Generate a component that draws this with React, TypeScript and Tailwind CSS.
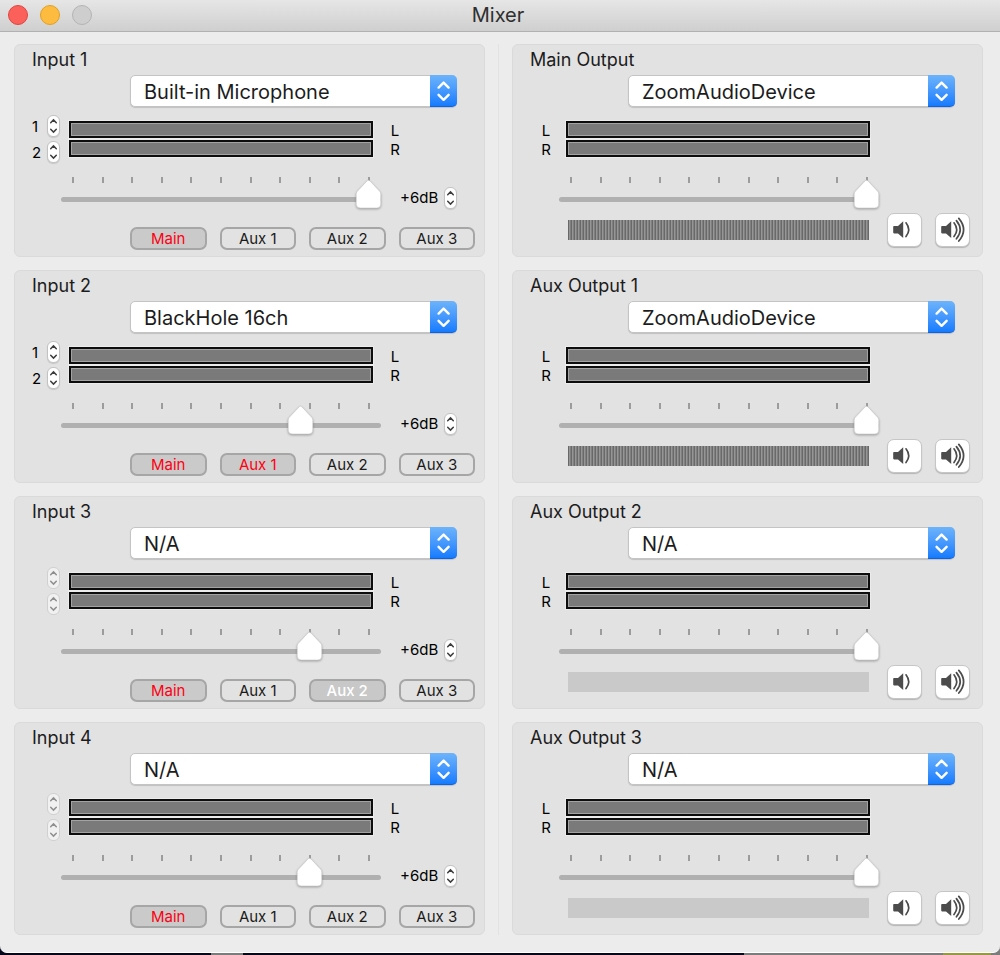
import { useState } from "react";
import type { ReactNode } from "react";

type RouteState = "off" | "on" | "muted";

type InputChannel = {
  name: string;
  device: string;
  channels: string[];
  level: number;
  gain: string;
  routes: RouteState[];
};

type OutputChannel = {
  name: string;
  device: string;
  buffering: boolean;
};

const DEVICES = ["Built-in Microphone", "BlackHole 16ch", "ZoomAudioDevice", "N/A"];
const ROUTES = ["Main", "Aux 1", "Aux 2", "Aux 3"];
const TICKS = Array.from({ length: 11 }, (_, i) => i);

const INPUTS: InputChannel[] = [
  { name: "Input 1", device: "Built-in Microphone", channels: ["1", "2"], level: 100, gain: "+6dB", routes: ["on", "off", "off", "off"] },
  { name: "Input 2", device: "BlackHole 16ch", channels: ["1", "2"], level: 77, gain: "+6dB", routes: ["on", "on", "off", "off"] },
  { name: "Input 3", device: "N/A", channels: ["", ""], level: 80, gain: "+6dB", routes: ["on", "off", "muted", "off"] },
  { name: "Input 4", device: "N/A", channels: ["", ""], level: 80, gain: "+6dB", routes: ["on", "off", "off", "off"] },
];

const OUTPUTS: OutputChannel[] = [
  { name: "Main Output", device: "ZoomAudioDevice", buffering: true },
  { name: "Aux Output 1", device: "ZoomAudioDevice", buffering: true },
  { name: "Aux Output 2", device: "N/A", buffering: false },
  { name: "Aux Output 3", device: "N/A", buffering: false },
];

function DeviceSelect({ label, value }: { label: string; value: string }) {
  return (
    <div className="relative mt-[5px] mr-7 ml-[116px]">
      <select
        aria-label={`${label} device`}
        defaultValue={value}
        className="block h-8 w-full appearance-none rounded-[5px] border border-[#c4c4c4] bg-white pt-px pr-8 pl-[13px] text-[20px] leading-[28px] text-[#1c1c1c] shadow-[0_1px_1px_rgba(0,0,0,0.15)]"
      >
        {DEVICES.map((d) => (
          <option key={d}>{d}</option>
        ))}
      </select>
      <span className="pointer-events-none absolute inset-y-0 right-0 flex w-[27px] items-center justify-center rounded-r-[5px] border-b border-[#0f63e0] bg-linear-to-b from-[#6cb3fa] to-[#147bff]">
        <svg width="14" height="20" viewBox="0 0 14 20" fill="none" stroke="white" strokeWidth="2.4" strokeLinecap="round" strokeLinejoin="round">
          <path d="M1.6 6.6 L6.6 1.6 L11.6 6.6 M1.6 13.8 L6.6 18.8 L11.6 13.8" />
        </svg>
      </span>
    </div>
  );
}

function Stepper({ label, disabled = false }: { label: string; disabled?: boolean }) {
  const look = disabled
    ? "bg-[#f1f1f1] text-[#8f8f8f] border-[#d0d0d0]"
    : "bg-white text-[#3c3c3c] border-[#c2c2c2] shadow-[0_1px_1px_rgba(0,0,0,0.12)]";
  return (
    <div className={`flex h-[22px] w-[13px] shrink-0 flex-col overflow-hidden rounded-[6px] border ${look}`}>
      <button type="button" disabled={disabled} aria-label={`${label} up`} className="flex flex-1 items-center justify-center">
        <svg width="9" height="6" viewBox="0 0 9 6" fill="none" stroke="currentColor" strokeWidth="1.5" strokeLinecap="round">
          <path d="M1.7 4.7 L4.5 1.9 L7.3 4.7" />
        </svg>
      </button>
      <button type="button" disabled={disabled} aria-label={`${label} down`} className="flex flex-1 items-center justify-center">
        <svg width="9" height="6" viewBox="0 0 9 6" fill="none" stroke="currentColor" strokeWidth="1.5" strokeLinecap="round">
          <path d="M1.7 1.3 L4.5 4.1 L7.3 1.3" />
        </svg>
      </button>
    </div>
  );
}

function Meters() {
  return (
    <div className="flex flex-1 flex-col gap-[2px]">
      {["L", "R"].map((side) => (
        <div key={side} className="h-[17px] border-2 border-[#0d0d0d] bg-[#7a7a7a] shadow-[0_0_0_1px_#ececec,inset_0_0_0_1px_#a3a3a3]" />
      ))}
    </div>
  );
}

function SideLabels() {
  return (
    <div className="w-[12px] pt-[2px] text-center text-[15px] leading-[19px] text-black">
      <div>L</div>
      <div>R</div>
    </div>
  );
}

function Fader({ label, initial }: { label: string; initial: number }) {
  const [value, setValue] = useState(initial);
  return (
    <div className="relative h-8 flex-1">
      <div className="flex justify-between px-[11px]">
        {TICKS.map((t) => (
          <span key={t} className="h-[6px] w-[2px] bg-[#9c9c9c]" />
        ))}
      </div>
      <div className="mt-[14px] h-[5px] rounded-full bg-[#b0b0b0]" />
      <div className="pointer-events-none absolute right-[12px] bottom-0 left-[12px] h-[30px]">
        <svg
          width="27"
          height="30"
          viewBox="0 0 27 30"
          className="absolute top-0 -ml-[14px] overflow-visible drop-shadow-[0_1px_1px_rgba(0,0,0,0.3)]"
          style={{ left: `${value}%` }}
        >
          <path
            d="M13.5 1.2 Q14.2 1.2 15 2 L24.6 12.2 Q25.8 13.6 25.8 15.2 V25 Q25.8 29 21.8 29 H5.2 Q1.2 29 1.2 25 V15.2 Q1.2 13.6 2.4 12.2 L12 2 Q12.8 1.2 13.5 1.2 Z"
            fill="white"
            stroke="#c6c6c6"
            strokeWidth="0.6"
          />
        </svg>
      </div>
      <input
        type="range"
        min={0}
        max={100}
        value={value}
        aria-label={`${label} level`}
        onChange={(e) => setValue(Number(e.target.value))}
        className="absolute inset-0 h-full w-full opacity-0"
      />
    </div>
  );
}

function RouteButton({ label, initial }: { label: string; initial: RouteState }) {
  const [state, setState] = useState(initial);
  const look = {
    off: "bg-transparent text-[#1a1a1a]",
    on: "bg-[#cacaca] text-[#ff0012]",
    muted: "bg-[#c8c8c8] text-white font-medium",
  }[state];
  return (
    <button
      type="button"
      aria-pressed={state !== "off"}
      onClick={() => setState(state === "off" ? "on" : "off")}
      className={`h-[23px] rounded-[7px] border-2 border-[#a6a6a6] pt-px text-[15px] leading-[18px] ${look}`}
    >
      {label}
    </button>
  );
}

function Panel({ title, children }: { title: string; children: ReactNode }) {
  return (
    <section className="h-[213px] rounded-[6px] border border-[#dadada] bg-[#e2e2e2] pt-[5px]">
      <h2 className="pl-[17px] text-[18px] leading-5 text-[#1c1c1c]">{title}</h2>
      <div className="-mx-px">{children}</div>
    </section>
  );
}

function InputPanel({ channel }: { channel: InputChannel }) {
  return (
    <Panel title={channel.name}>
      <DeviceSelect label={channel.name} value={channel.device} />
      <div className="mt-2 flex h-12 items-center pr-[84px] pl-[18px]">
        <div className="mr-[9px] flex flex-col gap-1">
          {channel.channels.map((c, i) => (
            <div key={i} className="flex h-[22px] items-center text-[15px] leading-5 text-black">
              <span className="w-[15px] pt-[2px]">{c}</span>
              <Stepper label={`${channel.name} channel ${i + 1}`} disabled={c === ""} />
            </div>
          ))}
        </div>
        <Meters />
        <div className="ml-[16px]">
          <SideLabels />
        </div>
      </div>
      <div className="mt-[14px] flex items-end pr-7 pl-[47px]">
        <Fader label={channel.name} initial={channel.level} />
        <span className="ml-[19px] w-11 text-[15px] leading-[22px] text-black">{channel.gain}</span>
        <Stepper label={`${channel.name} gain`} />
      </div>
      <div className="mt-[18px] mr-[10px] ml-[116px] grid grid-cols-4 gap-[13px]">
        {ROUTES.map((r, i) => (
          <RouteButton key={r} label={r} initial={channel.routes[i]} />
        ))}
      </div>
    </Panel>
  );
}

function SpeakerButton({ label, waves }: { label: string; waves: string[] }) {
  return (
    <button
      type="button"
      aria-label={label}
      className="flex h-[34px] w-[35px] shrink-0 items-center justify-center rounded-[7px] border border-[#c6c6c6] bg-white shadow-[0_1px_1px_rgba(0,0,0,0.2)]"
    >
      <svg width="29" height="26" viewBox="0 0 29 26" fill="none" stroke="#4c4c4c" strokeWidth="1.7" strokeLinecap="round">
        <path d="M4 9 H8 L13.2 4.2 V21 L8 16.4 H4 Q3.2 16.4 3.2 15.6 V9.8 Q3.2 9 4 9 Z" fill="#4c4c4c" stroke="none" />
        {waves.map((d) => (
          <path key={d} d={d} />
        ))}
      </svg>
    </button>
  );
}

const NEAR_WAVE = "M16 5.8 Q21.4 12.7 16 19.6";
const FAR_WAVES = [NEAR_WAVE, "M18.4 3.6 Q26 12.7 18.4 21.8", "M20.8 1.4 Q30.4 12.7 20.8 24"];

function OutputPanel({ channel }: { channel: OutputChannel }) {
  const bar = channel.buffering
    ? "bg-[repeating-linear-gradient(90deg,#696969_0_1px,#969696_1px_2px,#808080_2px_3px)]"
    : "bg-[#c9c9c9]";
  return (
    <Panel title={channel.name}>
      <DeviceSelect label={channel.name} value={channel.device} />
      <div className="mt-2 flex h-12 items-center pr-[113px] pl-[28px]">
        <div className="mr-[14px]">
          <SideLabels />
        </div>
        <Meters />
      </div>
      <div className="mt-[14px] flex pr-[104px] pl-[47px]">
        <Fader label={channel.name} initial={100} />
      </div>
      <div className="mt-1 flex items-center pr-[13px] pl-[56px]">
        <div className={`mr-[18px] h-5 flex-1 ${bar}`} />
        <div className="flex gap-[13px]">
          <SpeakerButton label={`${channel.name} quieter`} waves={[NEAR_WAVE]} />
          <SpeakerButton label={`${channel.name} louder`} waves={FAR_WAVES} />
        </div>
      </div>
    </Panel>
  );
}

export default function App() {
  return (
    <div className="min-h-screen bg-[linear-gradient(90deg,#07071c_0_21.1%,#7c7c7c_21.1%_24.3%,#07071c_24.3%_74.4%,#7c7c7c_74.4%_94.3%,#98983c_94.3%_99.1%,#7c7c7c_99.1%)] font-['Inter','Liberation_Sans',sans-serif]">
      <div className="overflow-hidden rounded-b-[7px] border-b border-white bg-[#ececec]">
        <header className="flex h-8 items-center border-b border-[#b1b1b1] bg-linear-to-b from-[#e6e6e6] to-[#cfcfcf] pr-3 pb-[2px] pl-2">
          <div className="flex flex-1 gap-3">
            <button type="button" aria-label="Close" className="size-5 rounded-full border border-[#e0443e] bg-[#fc605b]" />
            <button type="button" aria-label="Minimize" className="size-5 rounded-full border border-[#dfa023] bg-[#fdbc40]" />
            <button type="button" aria-label="Zoom" disabled className="size-5 rounded-full border border-[#b4b4b4] bg-[#cecece]" />
          </div>
          <h1 className="text-[20px] leading-7 text-[#2f2f2f]">Mixer</h1>
          <div className="flex-1" />
        </header>
        <main className="grid grid-cols-[1fr_1px_1fr] gap-x-[13px] pt-3 pr-[17px] pb-[17px] pl-[14px]">
          <div className="flex flex-col gap-[13px]">
            {INPUTS.map((c) => (
              <InputPanel key={c.name} channel={c} />
            ))}
          </div>
          <div className="bg-[#e2e2e2]" />
          <div className="flex flex-col gap-[13px]">
            {OUTPUTS.map((c) => (
              <OutputPanel key={c.name} channel={c} />
            ))}
          </div>
        </main>
      </div>
    </div>
  );
}
